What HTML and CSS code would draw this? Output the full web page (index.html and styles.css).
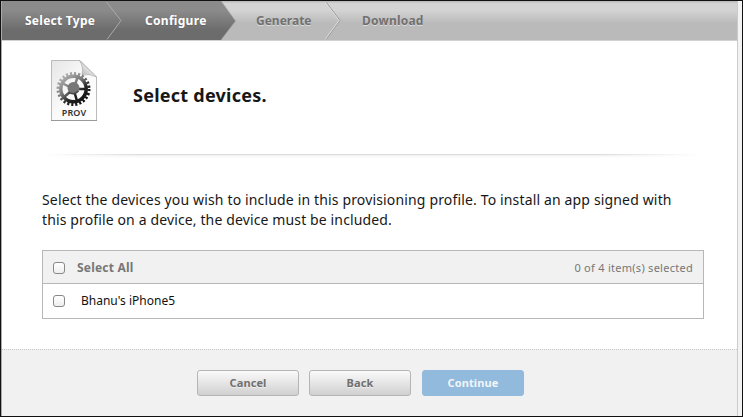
FILE: index.html
```html
<!DOCTYPE html>
<html lang="en">
<head>
<meta charset="utf-8">
<title>Select devices</title>
<link rel="stylesheet" href="styles.css">
</head>
<body>
<div class="window">
  <main class="panel">
    <nav class="steps">
      <div class="step done first"><span>Select Type</span>
        <svg class="chevron" width="16" height="39" viewBox="0 0 16 39"><path d="M0.5 1L15 19.5L1 38.5" fill="none" stroke="#aaa"/></svg></div>
      <div class="step done second"><span>Configure</span></div>
      <svg class="tip" width="15" height="39" viewBox="0 0 15 39"><defs><linearGradient id="dark" x2="0" y2="1"><stop offset=".25" stop-color="#8b8b8b"/><stop offset=".75" stop-color="#6c6c6c"/></linearGradient></defs><path d="M0 0L14.5 20L0 39Z" fill="url(#dark)"/><path d="M0 0L14.5 20L0 39" fill="none" stroke="#a0a0a0" stroke-width=".7"/></svg>
      <div class="step third"><span>Generate</span>
        <svg class="chevron" width="16" height="39" viewBox="0 0 16 39"><path d="M1 1L15 19.5L1 38.5" fill="none" stroke="#999"/><path d="M0 1L14 19.5L0 38.5" fill="none" stroke="#ddd"/></svg></div>
      <div class="step fourth"><span>Download</span></div>
    </nav>
    <header class="heading">
      <svg class="file-icon" width="48" height="63" viewBox="0 0 48 63">
        <defs>
          <linearGradient id="metal" gradientUnits="userSpaceOnUse" x1="12" y1="14" x2="34" y2="42"><stop offset="0" stop-color="#bbb"/><stop offset=".45" stop-color="#777"/><stop offset=".7" stop-color="#222"/><stop offset="1" stop-color="#111"/></linearGradient>
          <linearGradient id="paper" x2="1" y2="1"><stop offset="0" stop-color="#e6e6e6"/><stop offset=".5" stop-color="#fafafa"/><stop offset="1" stop-color="#fff"/></linearGradient>
          <linearGradient id="fold" x1="1" y1="0" x2="0" y2="1"><stop offset=".4" stop-color="#eee"/><stop offset="1" stop-color="#aaa"/></linearGradient>
        </defs>
        <path d="M1.500 .5H30L46.500 17V60.500H1.500Z" fill="url(#paper)" stroke="#bbb"/>
        <path d="M1 60.500H47" stroke="#999"/>
        <path d="M29.500 .5L46.500 17Q39 13 32 15Q34 7 29.500 .5Z" fill="url(#fold)" stroke="#aaa" stroke-width=".7"/>
        <g fill="none" stroke="url(#metal)">
          <circle cx="23.500" cy="29" r="15.500" stroke-width="3" stroke-dasharray="2.130 1.928"/>
          <circle cx="23.500" cy="29" r="12.700" stroke-width="3.500"/>
          <path d="M23.500 29L12 23M23.500 29L28 16M23.500 29L37 29M23.500 29L27 41M23.500 29L14 37" stroke-width="2.500"/>
        </g>
        <circle cx="23.500" cy="28" r="6" fill="#777"/>
        <path d="M18.500 32Q23.500 36 28.500 31" fill="none" stroke="#444" stroke-width="1.500"/>
        <text x="24" y="56" text-anchor="middle" class="file-label">PROV</text>
      </svg>
      <h1>Select devices.</h1>
    </header>
    <div class="divider"></div>
    <p class="intro"><span class="line-one">Select the devices you wish to include in this provisioning profile. To install an app signed with</span><br><span class="line-two">this profile on a device, the device must be included.</span></p>
    <section class="devices">
      <div class="row all"><i class="check"></i><span class="all-label">Select All</span><span class="count">0 of 4 item(s) selected</span></div>
      <div class="row"><i class="check"></i><span class="device">Bhanu's iPhone5</span></div>
    </section>
    <footer class="actions">
      <button>Cancel</button>
      <button>Back</button>
      <button class="primary">Continue</button>
    </footer>
  </main>
</div>
</body>
</html>
```
FILE: styles.css
```css
* { box-sizing: border-box; }
body { margin: 0; font-family: "Noto Sans", "Open Sans", sans-serif; color: #171717; }
.window { width: 743px; height: 417px; border: 1px solid #111; background: #f3f3f3; padding-right: 3px; }
.panel { width: 737px; height: 415px; display: flex; flex-direction: column; background: #fff; border-left: 1px solid #aaa; border-right: 1px solid #cbcbcb; }
.steps { height: 40px; flex: none; display: flex; border-bottom: 1px solid #d2d2d2; background: linear-gradient(#bcbcbc 1px, #d4d4d4 2px 9px, #bababa 22px); font-size: 12px; font-weight: bold; color: #707070; text-shadow: 0 1px 0 #ddd; }
.step { position: relative; height: 39px; line-height: 39px; white-space: nowrap; }
.step.done { color: #fff; text-shadow: 0 1px 1px #666; background: linear-gradient(#8b8b8b 9px, #6c6c6c 29px); }
.first { width: 104px; padding-left: 23px; letter-spacing: .26px; }
.second { width: 115px; padding-left: 39px; letter-spacing: .3px; }
.third { width: 89px; padding-left: 20px; }
.fourth { padding-left: 37px; letter-spacing: .2px; }
.tip { flex: none; }
.chevron { position: absolute; right: -16px; top: 0; z-index: 1; }
.heading { height: 113px; flex: none; display: flex; padding: 19px 0 0 48px; }
.file-label { font-size: 9px; font-weight: 600; fill: #333; letter-spacing: .1px; }
h1 { font-size: 18px; line-height: 26px; margin: 22px 0 0 35px; letter-spacing: .25px; }
.divider { height: 4px; flex: none; margin: 0 39px 0 40px; background: linear-gradient(90deg, #fff, transparent 15%, transparent 85%, #fff), linear-gradient(#dcdcdc 1px, #f0f0f0 1px, #fff); }
.intro { margin: 32px 0 0 40px; font-size: 14px; line-height: 20px; white-space: nowrap; }
.line-one { letter-spacing: .152px; }
.line-two { letter-spacing: .13px; }
.devices { width: 662px; height: 69px; flex: none; margin: 20px 0 0 40px; border: 1px solid #b7b7b7; }
.row { height: 34px; display: flex; align-items: center; padding: 0 10px; font-size: 12px; color: #111; }
.row.all { height: 33px; background: #f1f1f1; border-bottom: 1px solid #b7b7b7; color: #777; }
.check { width: 12px; height: 12px; border: 1px solid #888; border-radius: 3px; background: linear-gradient(#fff, #eee); }
.all .check { margin-top: 2px; }
.all-label { font-weight: bold; margin-left: 12px; letter-spacing: .2px; }
.count { margin-left: auto; font-size: 11px; letter-spacing: .27px; }
.device { margin: -1px 0 0 16px; }
.actions { height: 67px; margin-top: auto; display: flex; gap: 10px; padding: 20px 0 0 195px; border-top: 1px dotted #c8c8c8; background: #f1f1f1; }
button { width: 102px; height: 26px; padding: 0 0 1px; border: 1px solid #b5b5b5; border-radius: 3px; background: linear-gradient(#fafafa, #d0d0d0); font: bold 11px "Noto Sans", sans-serif; color: #707070; text-shadow: 0 1px 0 #eee; letter-spacing: .1px; }
.primary { margin-left: 1px; border-color: #91badd; background: #91badd; color: #f1f5f8; text-shadow: none; }
```
